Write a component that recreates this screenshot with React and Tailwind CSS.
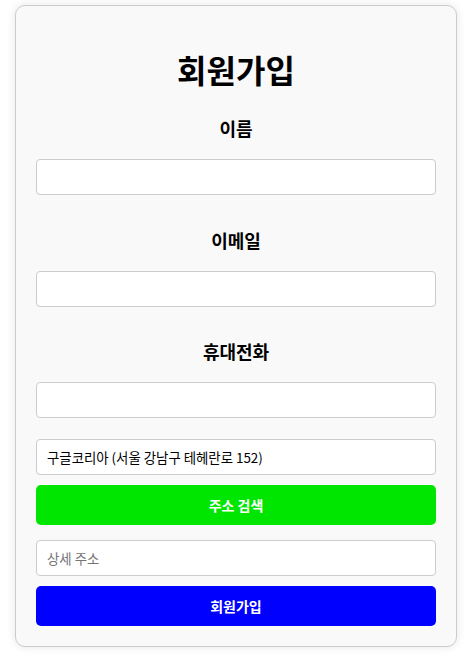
export default function App() {
	const font = { fontFamily: '"Noto Sans CJK KR", "Noto Sans", sans-serif' };
	return (
		<div className="min-h-[657px] bg-white pt-[5px]" style={font}>
			<div className="ml-[15px] w-[442px] rounded-[10px] border border-[#cccccc] bg-[#f9f9f9] px-5 pb-5 shadow-[0_0_10px_rgba(0,0,0,0.1)]">
				<h1 className="pt-[39px] pb-[24px] text-center text-[32px] font-bold leading-[48px] text-black">
					회원가입
				</h1>
				<Field label="이름" first />
				<Field label="이메일" />
				<Field label="휴대전화" />
				<input
					readOnly
					value="구글코리아 (서울 강남구 테헤란로 152)"
					className="mt-[21px] block h-[36px] w-full rounded-[4px] border border-[#cccccc] bg-white px-[10px] text-[13.4px] text-black outline-none"
				/>
				<button className="mt-[10px] block h-[40px] w-full rounded-[5px] bg-[#00e600] text-[14px] font-semibold text-white">
					주소 검색
				</button>
				<input
					placeholder="상세 주소"
					className="mt-[15px] block h-[36px] w-full rounded-[4px] border border-[#cccccc] bg-white px-[10px] text-[13.4px] text-black outline-none placeholder:text-[#757575]"
				/>
				<button className="mt-[10px] block h-[40px] w-full rounded-[5px] bg-[#0000ff] text-[14px] font-semibold text-white">
					회원가입
				</button>
			</div>
		</div>
	);
}

function Field({ label, first }) {
	return (
		<div className={first ? "" : "pt-[33.5px]"}>
			<h3 className="text-center text-[18px] font-bold leading-[22px] text-black">
				{label}
			</h3>
			<input className="mt-[20px] block h-[36px] w-full rounded-[4px] border border-[#cccccc] bg-white px-[10px] text-[13.4px] outline-none" />
		</div>
	);
}
